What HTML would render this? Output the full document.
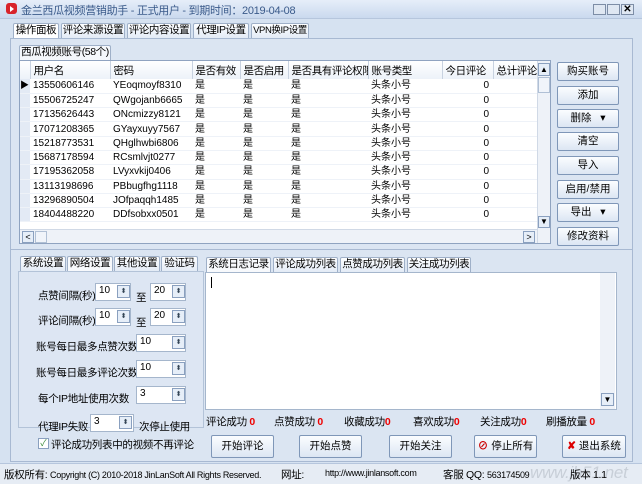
<!DOCTYPE html><html><head><meta charset="utf-8"><style>
*{box-sizing:border-box;margin:0;padding:0;white-space:nowrap}
body{width:642px;height:484px;overflow:hidden;background:#d6e2f1;font-family:"Liberation Sans","Noto Sans CJK SC",sans-serif;font-size:10px;color:#000;position:relative}
.a{position:absolute}
.tab{position:absolute;height:15px;border:1px solid #9fb0c8;border-bottom:none;background:linear-gradient(#fdfeff,#e3ebf6);font-size:10.5px;line-height:13px;text-align:center;border-radius:2px 2px 0 0;overflow:hidden;letter-spacing:-0.4px}
.btn{position:absolute;border:1px solid #7f97b8;background:linear-gradient(#fbfdff,#dce6f3);text-align:center;font-size:10.5px;border-radius:2px}
.grid td{height:14.3px;font-size:10px;padding:0 0 0 3px;border-bottom:1px solid #eef2f8;line-height:13px;overflow:hidden}
.grid th{font-weight:normal;text-align:left;padding:0 0 0 3px;height:17px;border-right:1px solid #c8d2e0;background:linear-gradient(#fff,#edf2f9);font-size:10.5px;overflow:hidden;letter-spacing:-0.4px}
.grid tr{height:14.3px}
.inp{position:absolute;background:#fff;border:1px solid #a5b6cc;height:18px;font-size:10px;padding:1px 3px}
.spin{position:absolute;width:13px;height:13px;border:1px solid #8aa0bf;background:#e6eef8;font-size:7px;text-align:center;line-height:11px;color:#345}
.lbl{position:absolute;font-size:10.5px;letter-spacing:-0.3px}
.r{color:#e00;font-weight:bold}
</style></head><body>
<div class="a" style="left:0;top:0;width:642px;height:19px;background:linear-gradient(#e6eef9,#cad9ee);border-bottom:1px solid #b6c6dd"></div>
<div class="a" style="left:6px;top:3px;width:11px;height:11px;background:#d8232a;border-radius:3px"></div>
<div class="a" style="left:10px;top:6px;width:0;height:0;border-left:4px solid #fff;border-top:3px solid transparent;border-bottom:3px solid transparent"></div>
<div class="lbl" style="left:21px;top:2px;color:#3a5a8a;font-size:11px">金兰西瓜视频营销助手 - 正式用户 - 到期时间：2019-04-08</div>
<div class="a" style="left:593px;top:4px;width:13px;height:11px;border:1px solid #7d8da6;background:#dfe7f2"></div>
<div class="a" style="left:607px;top:4px;width:13px;height:11px;border:1px solid #7d8da6;background:#dfe7f2"></div>
<div class="a" style="left:621px;top:4px;width:13px;height:11px;border:1px solid #7d8da6;background:#dfe7f2;font-size:10px;line-height:9px;text-align:center;font-weight:bold">✕</div>

<div class="tab" style="left:13px;top:23px;width:46px;background:#fff">操作面板</div>
<div class="tab" style="left:61px;top:23px;width:64px">评论来源设置</div>
<div class="tab" style="left:127px;top:23px;width:64px">评论内容设置</div>
<div class="tab" style="left:193px;top:23px;width:56px">代理IP设置</div>
<div class="tab" style="left:251px;top:23px;width:58px;font-size:9.5px">VPN换IP设置</div>
<div class="a" style="left:10px;top:38px;width:623px;height:212px;border:1px solid #a8b9d2;background:#dbe5f2"></div>
<div class="tab" style="left:19px;top:45px;width:92px;background:#f4f7fb">西瓜视频账号(58个)</div>
<div class="a" style="left:19px;top:60px;width:532px;height:184px;border:1px solid #8fa3c0;background:#fff;overflow:hidden">
<table class="grid" style="border-collapse:collapse;width:517px;table-layout:fixed">
<colgroup><col style="width:10px"><col style="width:80px"><col style="width:82px"><col style="width:48px"><col style="width:48px"><col style="width:80px"><col style="width:74px"><col style="width:51px"><col style="width:44px"></colgroup>
<tr style="height:18px"><th style="padding:0"></th><th>用户名</th><th>密码</th><th>是否有效</th><th>是否启用</th><th>是否具有评论权限</th><th>账号类型</th><th>今日评论</th><th>总计评论</th></tr>
<tbody>
<tr><td style="background:#e3eaf5;padding:0;font-size:9px">▶</td><td>13550606146</td><td>YEoqmoyf8310</td><td>是</td><td>是</td><td>是</td><td>头条小号</td><td style="text-align:right;padding-right:4px">0</td><td></td></tr>
<tr><td style="background:#e3eaf5"></td><td>15506725247</td><td>QWgojanb6665</td><td>是</td><td>是</td><td>是</td><td>头条小号</td><td style="text-align:right;padding-right:4px">0</td><td></td></tr>
<tr><td style="background:#e3eaf5"></td><td>17135626443</td><td>ONcmizzy8121</td><td>是</td><td>是</td><td>是</td><td>头条小号</td><td style="text-align:right;padding-right:4px">0</td><td></td></tr>
<tr><td style="background:#e3eaf5"></td><td>17071208365</td><td>GYayxuyy7567</td><td>是</td><td>是</td><td>是</td><td>头条小号</td><td style="text-align:right;padding-right:4px">0</td><td></td></tr>
<tr><td style="background:#e3eaf5"></td><td>15218773531</td><td>QHglhwbi6806</td><td>是</td><td>是</td><td>是</td><td>头条小号</td><td style="text-align:right;padding-right:4px">0</td><td></td></tr>
<tr><td style="background:#e3eaf5"></td><td>15687178594</td><td>RCsmlvjt0277</td><td>是</td><td>是</td><td>是</td><td>头条小号</td><td style="text-align:right;padding-right:4px">0</td><td></td></tr>
<tr><td style="background:#e3eaf5"></td><td>17195362058</td><td>LVyxvkij0406</td><td>是</td><td>是</td><td>是</td><td>头条小号</td><td style="text-align:right;padding-right:4px">0</td><td></td></tr>
<tr><td style="background:#e3eaf5"></td><td>13113198696</td><td>PBbugfhg1118</td><td>是</td><td>是</td><td>是</td><td>头条小号</td><td style="text-align:right;padding-right:4px">0</td><td></td></tr>
<tr><td style="background:#e3eaf5"></td><td>13296890504</td><td>JOfpaqqh1485</td><td>是</td><td>是</td><td>是</td><td>头条小号</td><td style="text-align:right;padding-right:4px">0</td><td></td></tr>
<tr><td style="background:#e3eaf5"></td><td>18404488220</td><td>DDfsobxx0501</td><td>是</td><td>是</td><td>是</td><td>头条小号</td><td style="text-align:right;padding-right:4px">0</td><td></td></tr>
</tbody></table>
<div class="a" style="left:0;top:168px;width:517px;height:15px;background:#eef2f8;border-top:1px solid #d0d9e6"></div>
<div class="a" style="left:2px;top:170px;width:12px;height:12px;border:1px solid #8aa0bf;background:#e6eef8;font-size:9px;line-height:10px;text-align:center">&lt;</div>
<div class="a" style="left:15px;top:170px;width:12px;height:12px;border:1px solid #b0c0d5;background:#f0f4fa"></div>
<div class="a" style="left:503px;top:170px;width:12px;height:12px;border:1px solid #8aa0bf;background:#e6eef8;font-size:9px;line-height:10px;text-align:center">&gt;</div>
<div class="a" style="left:517px;top:0;width:14px;height:183px;background:#eef2f8;border-left:1px solid #d0d9e6"></div>
<div class="a" style="left:518px;top:2px;width:12px;height:13px;border:1px solid #8aa0bf;background:#e6eef8;font-size:8px;line-height:11px;text-align:center">▲</div>
<div class="a" style="left:518px;top:16px;width:12px;height:16px;border:1px solid #b0c0d5;background:#f0f4fa"></div>
<div class="a" style="left:518px;top:155px;width:12px;height:12px;border:1px solid #8aa0bf;background:#e6eef8;font-size:8px;line-height:10px;text-align:center">▼</div>
</div>
<div class="btn" style="left:557px;top:62px;width:62px;height:19px;line-height:17px">购买账号</div>
<div class="btn" style="left:557px;top:86px;width:62px;height:19px;line-height:17px">添加</div>
<div class="btn" style="left:557px;top:109px;width:62px;height:19px;line-height:17px">删除 &nbsp;&nbsp;▾</div>
<div class="btn" style="left:557px;top:132px;width:62px;height:19px;line-height:17px">清空</div>
<div class="btn" style="left:557px;top:156px;width:62px;height:19px;line-height:17px">导入</div>
<div class="btn" style="left:557px;top:180px;width:62px;height:19px;line-height:17px">启用/禁用</div>
<div class="btn" style="left:557px;top:203px;width:62px;height:19px;line-height:17px">导出 &nbsp;&nbsp;▾</div>
<div class="btn" style="left:557px;top:227px;width:62px;height:19px;line-height:17px">修改资料</div>

<div class="a" style="left:10px;top:250px;width:623px;height:212px;border:1px solid #a8b9d2;border-top:none;background:#dbe5f2"></div>
<div class="tab" style="left:20px;top:256px;width:46px">系统设置</div>
<div class="tab" style="left:67px;top:256px;width:46px;background:#f7f9fc">网络设置</div>
<div class="tab" style="left:114px;top:256px;width:46px">其他设置</div>
<div class="tab" style="left:161px;top:256px;width:37px">验证码</div>
<div class="a" style="left:18px;top:271px;width:186px;height:157px;border:1px solid #b3c3d8;background:#dde6f3"></div>
<div class="lbl" style="left:38px;top:288px">点赞间隔(秒)</div>
<div class="inp" style="left:95px;top:283px;width:36px">10</div><div class="spin" style="left:117px;top:285px">⬍</div>
<div class="lbl" style="left:136px;top:290px">至</div>
<div class="inp" style="left:150px;top:283px;width:36px">20</div><div class="spin" style="left:172px;top:285px">⬍</div>
<div class="lbl" style="left:38px;top:313px">评论间隔(秒)</div>
<div class="inp" style="left:95px;top:308px;width:36px">10</div><div class="spin" style="left:117px;top:310px">⬍</div>
<div class="lbl" style="left:136px;top:315px">至</div>
<div class="inp" style="left:150px;top:308px;width:36px">20</div><div class="spin" style="left:172px;top:310px">⬍</div>
<div class="lbl" style="left:36px;top:339px">账号每日最多点赞次数</div>
<div class="inp" style="left:136px;top:334px;width:50px">10</div><div class="spin" style="left:172px;top:336px">⬍</div>
<div class="lbl" style="left:36px;top:365px">账号每日最多评论次数</div>
<div class="inp" style="left:136px;top:360px;width:50px">10</div><div class="spin" style="left:172px;top:362px">⬍</div>
<div class="lbl" style="left:38px;top:391px">每个IP地址使用次数</div>
<div class="inp" style="left:136px;top:386px;width:50px">3</div><div class="spin" style="left:172px;top:388px">⬍</div>
<div class="lbl" style="left:38px;top:419px">代理IP失败</div>
<div class="inp" style="left:90px;top:414px;width:44px">3</div><div class="spin" style="left:119px;top:416px">⬍</div>
<div class="lbl" style="left:139px;top:419px">次停止使用</div>
<div class="a" style="left:38px;top:438px;width:11px;height:11px;border:1px solid #8aa0bf;background:#fff;font-size:9px;line-height:9px;color:#3a8a3a;text-align:center">✓</div>
<div class="lbl" style="left:51px;top:437px">评论成功列表中的视频不再评论</div>

<div class="tab" style="left:206px;top:257px;width:65px;background:#f7f9fc">系统日志记录</div>
<div class="tab" style="left:273px;top:257px;width:65px">评论成功列表</div>
<div class="tab" style="left:340px;top:257px;width:65px">点赞成功列表</div>
<div class="tab" style="left:407px;top:257px;width:64px">关注成功列表</div>
<div class="a" style="left:205px;top:272px;width:412px;height:138px;border:1px solid #a5b6cc;background:#fff"></div>
<div class="a" style="left:211px;top:277px;width:1px;height:11px;background:#000"></div>
<div class="a" style="left:600px;top:273px;width:15px;height:136px;background:#eef2f8"></div>
<div class="a" style="left:601px;top:393px;width:13px;height:13px;border:1px solid #8aa0bf;background:#e6eef8;font-size:8px;line-height:11px;text-align:center">▼</div>
<div class="lbl" style="left:206px;top:414px">评论成功 <span class="r">0</span></div>
<div class="lbl" style="left:274px;top:414px">点赞成功 <span class="r">0</span></div>
<div class="lbl" style="left:344px;top:414px">收藏成功<span class="r">0</span></div>
<div class="lbl" style="left:413px;top:414px">喜欢成功<span class="r">0</span></div>
<div class="lbl" style="left:480px;top:414px">关注成功<span class="r">0</span></div>
<div class="lbl" style="left:546px;top:414px">刷播放量 <span class="r">0</span></div>
<div class="btn" style="left:211px;top:435px;width:63px;height:23px;line-height:21px">开始评论</div>
<div class="btn" style="left:299px;top:435px;width:63px;height:23px;line-height:21px">开始点赞</div>
<div class="btn" style="left:389px;top:435px;width:63px;height:23px;line-height:21px">开始关注</div>
<div class="btn" style="left:474px;top:435px;width:63px;height:23px;line-height:21px"><span style="color:#c00;font-weight:bold">⊘</span> 停止所有</div>
<div class="btn" style="left:562px;top:435px;width:64px;height:23px;line-height:21px"><span style="color:#d00;font-weight:bold">✘</span> 退出系统</div>

<div class="a" style="left:0;top:463px;width:642px;height:21px;background:#e6ecf4;border-top:1px solid #b6c6dd"></div>
<div class="lbl" style="left:4px;top:467px">版权所有: <span style="font-size:9px">Copyright (C) 2010-2018 JinLanSoft All Rights Reserved.</span></div>
<div class="lbl" style="left:281px;top:467px">网址:</div>
<div class="lbl" style="left:325px;top:468px;font-size:9px">http://www.jinlansoft.com</div>
<div class="lbl" style="left:443px;top:467px">客服 QQ: <span style="font-size:9px">563174509</span></div>
<div class="lbl" style="left:530px;top:463px;font-size:17px;color:#c8cfd8;font-style:italic">www.jb51.net</div>
<div class="lbl" style="left:570px;top:467px">版本 1.1</div>
</body></html>
